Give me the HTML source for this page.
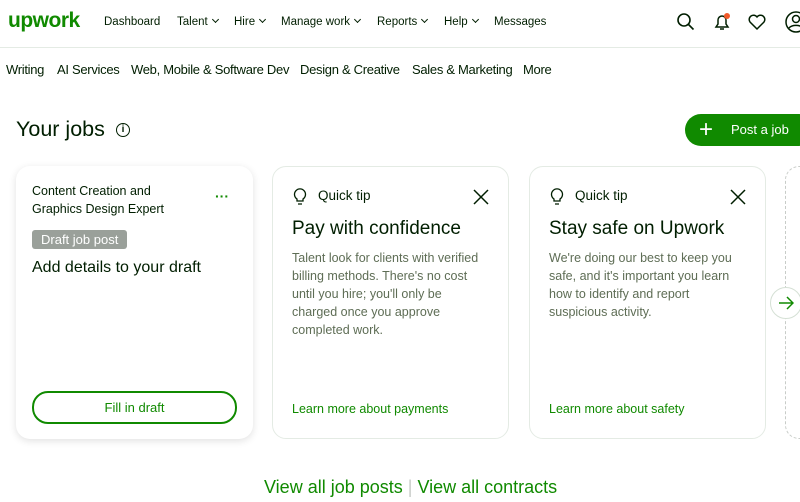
<!DOCTYPE html><html><head><style>
body{margin:0;width:800px;height:502px;overflow:hidden;background:#fff;font-family:"Liberation Sans",sans-serif;color:#001e00;position:relative}
.a{position:absolute;white-space:nowrap}
.nav{font-size:11.5px;line-height:14px;color:#001e00;top:15px}
.c{display:inline-block;width:4px;height:4px;border-right:1.3px solid #001e00;border-bottom:1.3px solid #001e00;transform:rotate(45deg);margin-left:5px;position:relative;top:-3px}
.cat{font-size:13px;letter-spacing:-0.3px;top:62px;color:#001e00}
.card{position:absolute;top:166px;width:237px;height:273px;border:1px solid #e4ebe4;border-radius:14px;box-sizing:border-box;background:#fff}
.g{color:#108a00}
.tip{font-size:13.5px;top:21px;left:45px}
.h{font-size:19px;top:51px;left:19px}
.p{font-size:12.5px;line-height:18px;color:#5e6d55;top:82px;left:19px;white-space:normal;width:190px}
.l{font-size:12.5px;color:#108a00;top:235px;left:19px}
</style></head><body>
<div class="a g" style="left:8px;top:9px;font-size:21px;font-weight:bold;letter-spacing:-0.5px">upwork</div>
<div class="a nav" style="left:104px">Dashboard</div>
<div class="a nav" style="left:177px">Talent<span class="c"></span></div>
<div class="a nav" style="left:234px">Hire<span class="c"></span></div>
<div class="a nav" style="left:281px">Manage work<span class="c"></span></div>
<div class="a nav" style="left:377px">Reports<span class="c"></span></div>
<div class="a nav" style="left:444px">Help<span class="c"></span></div>
<div class="a nav" style="left:494px">Messages</div>
<svg class="a" style="left:676px;top:12px" width="20" height="20" fill="none" stroke="#001e00" stroke-width="1.6"><circle cx="8" cy="8" r="6"/><path d="M12.5 12.5l5 5"/></svg>
<svg class="a" style="left:712px;top:12px" width="20" height="20" fill="none" stroke="#001e00" stroke-width="1.5"><path d="M4 15h12l-2-3V8a4 4 0 0 0-8 0v4z M8 17h4"/><circle cx="15" cy="4" r="3" fill="#f1592a" stroke="none"/></svg>
<svg class="a" style="left:747px;top:12px" width="20" height="20" fill="none" stroke="#001e00" stroke-width="1.5"><path d="M10 17L3 10a4 4 0 0 1 7-5 4 4 0 0 1 7 5z"/></svg>
<svg class="a" style="left:784px;top:10px" width="20" height="24" fill="none" stroke="#001e00" stroke-width="1.5"><circle cx="12" cy="12" r="10"/><circle cx="12" cy="9" r="3.5"/><path d="M5 18a8 5 0 0 1 14 0"/></svg>
<div class="a" style="left:0;top:47px;width:800px;height:1px;background:#e4ebe4"></div>
<div class="a cat" style="left:6px">Writing</div>
<div class="a cat" style="left:57px">AI Services</div>
<div class="a cat" style="left:131px">Web, Mobile &amp; Software Dev</div>
<div class="a cat" style="left:300px">Design &amp; Creative</div>
<div class="a cat" style="left:412px">Sales &amp; Marketing</div>
<div class="a cat" style="left:523px">More</div>
<div class="a" style="left:16px;top:117px;font-size:21.5px">Your jobs</div>
<div class="a" style="left:116px;top:123px;width:12px;height:12px;border:1.5px solid #001e00;border-radius:50%;font-size:10px;text-align:center;line-height:12px;font-weight:bold">i</div>
<div class="a" style="left:685px;top:114px;width:130px;height:32px;border-radius:16px;background:#108a00;color:#fff;font-size:13px"><span style="position:absolute;left:14px;top:2px;font-size:24px;font-weight:300">+</span><span style="position:absolute;left:46px;top:8px">Post a job</span></div>
<div class="card" style="left:16px;box-shadow:0 2px 8px rgba(0,0,0,.12);border:none">
<div class="a" style="left:16px;top:16px;font-size:12.5px;line-height:18px">Content Creation and<br>Graphics Design Expert</div>
<div class="a g" style="left:199px;top:22px;font-size:14px;font-weight:bold">···</div>
<div class="a" style="left:16px;top:64px;background:#9aa09a;color:#fff;font-size:13px;padding:2px 9px;border-radius:3px">Draft job post</div>
<div class="a" style="left:16px;top:93px;font-size:16px">Add details to your draft</div>
<div class="a g" style="left:16px;top:225px;width:201px;height:29px;border:2px solid #108a00;border-radius:16px;text-align:center;line-height:29px;font-size:13px">Fill in draft</div>
</div>
<div class="card" style="left:272px">
<svg class="a" style="left:19px;top:19px" width="16" height="20" fill="none" stroke="#001e00" stroke-width="1.3"><path d="M5 13a5.5 5.5 0 1 1 6 0v2H5z M6 18h4"/></svg>
<div class="a tip">Quick tip</div>
<svg class="a" style="left:200px;top:22px" width="16" height="16" stroke="#001e00" stroke-width="1.5"><path d="M1 1l14 14M15 1L1 15"/></svg>
<div class="a h">Pay with confidence</div>
<div class="a p">Talent look for clients with verified billing methods. There's no cost until you hire; you'll only be charged once you approve completed work.</div>
<div class="a l">Learn more about payments</div>
</div>
<div class="card" style="left:529px">
<svg class="a" style="left:19px;top:19px" width="16" height="20" fill="none" stroke="#001e00" stroke-width="1.3"><path d="M5 13a5.5 5.5 0 1 1 6 0v2H5z M6 18h4"/></svg>
<div class="a tip">Quick tip</div>
<svg class="a" style="left:200px;top:22px" width="16" height="16" stroke="#001e00" stroke-width="1.5"><path d="M1 1l14 14M15 1L1 15"/></svg>
<div class="a h">Stay safe on Upwork</div>
<div class="a p">We're doing our best to keep you safe, and it's important you learn how to identify and report suspicious activity.</div>
<div class="a l">Learn more about safety</div>
</div>
<div class="a" style="left:785px;top:166px;width:40px;height:273px;border:1.5px dashed #c8ccc8;border-radius:14px;box-sizing:border-box"></div>
<div class="a" style="left:770px;top:287px;width:30px;height:30px;border:1px solid #d5e0d5;border-radius:50%;background:#fff"><svg style="position:absolute;left:7px;top:7px" width="16" height="16" fill="none" stroke="#108a00" stroke-width="1.5"><path d="M1 8h14M9 2l6 6-6 6"/></svg></div>
<div class="a g" style="left:264px;top:477px;font-size:18px">View all job posts <span style="color:#c8ccc8">|</span> View all contracts</div>
</body></html>
